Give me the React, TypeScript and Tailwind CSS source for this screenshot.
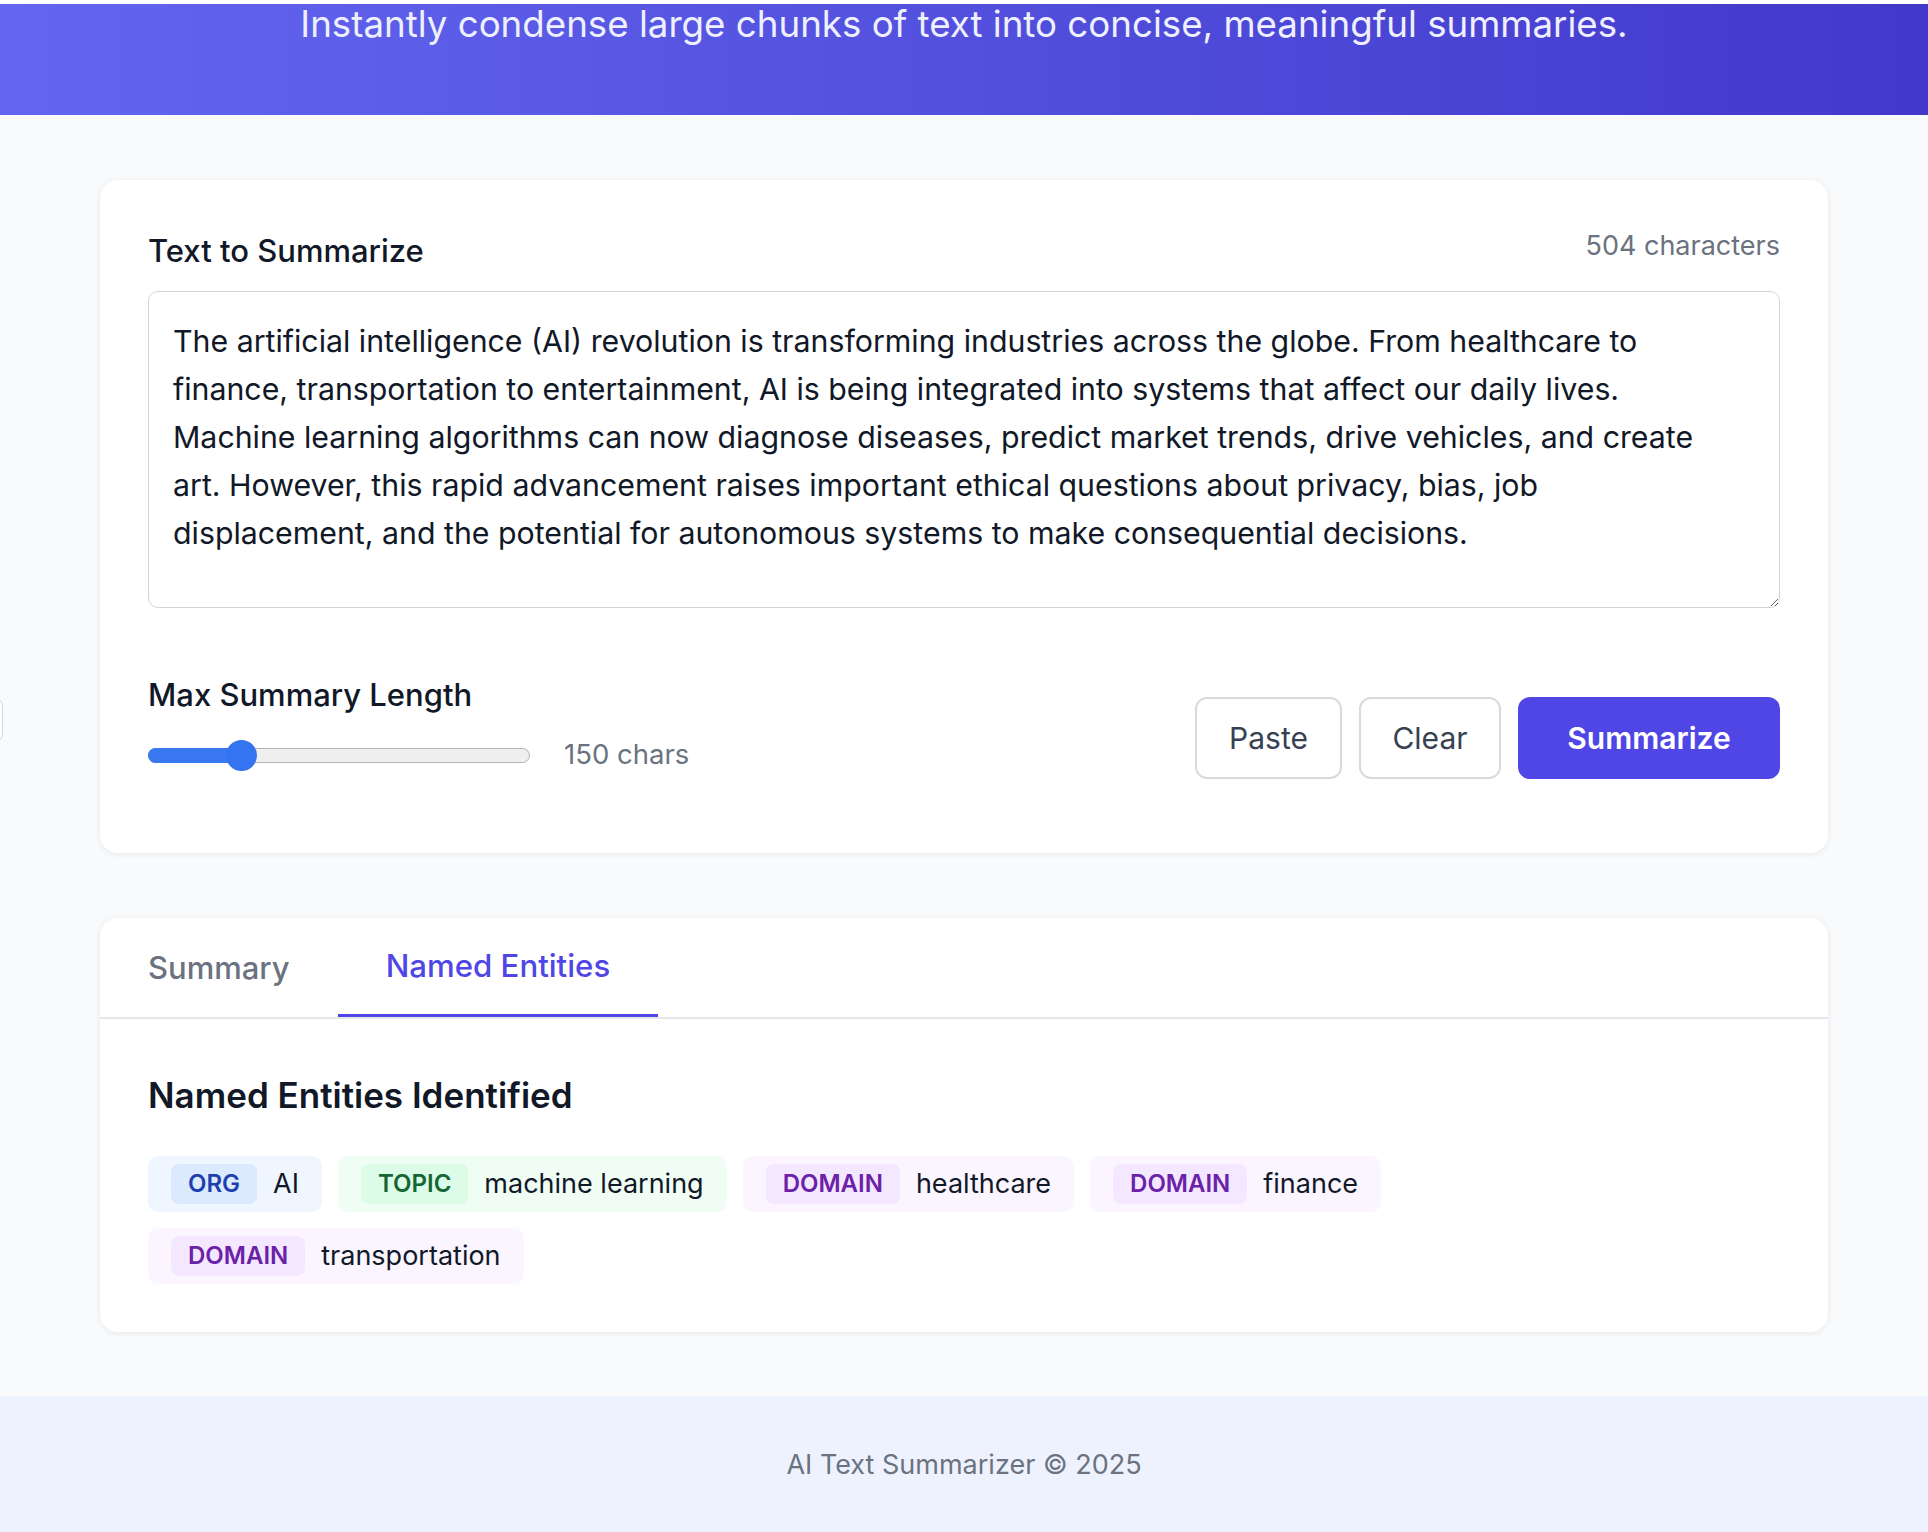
import { useState } from "react";

// line breaks replace spaces so the wrap matches the original (length stays 504)
const SAMPLE_TEXT =
  "The artificial intelligence (AI) revolution is transforming industries across the globe. From healthcare to\nfinance, transportation to entertainment, AI is being integrated into systems that affect our daily lives.\nMachine learning algorithms can now diagnose diseases, predict market trends, drive vehicles, and create\nart. However, this rapid advancement raises important ethical questions about privacy, bias, job\ndisplacement, and the potential for autonomous systems to make consequential decisions.";

type Entity = { type: "ORG" | "TOPIC" | "DOMAIN"; text: string };

const entities: Entity[] = [
  { type: "ORG", text: "AI" },
  { type: "TOPIC", text: "machine learning" },
  { type: "DOMAIN", text: "healthcare" },
  { type: "DOMAIN", text: "finance" },
  { type: "DOMAIN", text: "transportation" },
];

const chipStyles = {
  ORG: { chip: "bg-[#eff6ff]", badge: "bg-[#dbeafe] text-[#1e40af]" },
  TOPIC: { chip: "bg-[#f0fdf4]", badge: "bg-[#dcfce7] text-[#166534]" },
  DOMAIN: { chip: "bg-[#faf5ff]", badge: "bg-[#f3e8ff] text-[#6b21a8]" },
};

const MIN = 50;
const MAX = 500;

const App = () => {
  const [text, setText] = useState(SAMPLE_TEXT);
  const [maxLength] = useState(150);
  const [tab, setTab] = useState<"summary" | "entities">("entities");

  // thumb position on the 382px track
  const pct = (maxLength - MIN) / (MAX - MIN);
  const thumbLeft = pct * (382 - 31);

  return (
    <div className="relative flex min-h-screen flex-col bg-[#f9fafb] font-[Inter,'Noto_Sans',sans-serif] text-[#111827]">
      <div className="h-[4px] bg-white" />
      {/* header */}
      <header className="bg-linear-to-r from-[#6366f1] to-[#4338ca] pb-[71px] text-center">
        <p className="text-[36.7px] leading-[40px] text-[#eef0ff]">
          Instantly condense large chunks of text into concise, meaningful summaries.
        </p>
      </header>

      {/* off-screen floating thing at left edge */}
      <div className="absolute left-[-120px] top-[698px] h-[44px] w-[123px] rounded-lg border border-gray-300 bg-white" />

      <main className="flex flex-col gap-[65px] px-[100px] pt-[65px] pb-[64px]">
        {/* input card */}
        <section className="rounded-[18px] bg-white px-[48px] pt-[48px] pb-[74px] shadow-[0_1px_6px_rgba(0,0,0,0.08)]">
          <div className="flex items-start justify-between">
            <label htmlFor="input" className="text-[31px] font-medium leading-[46px]">
              Text to Summarize
            </label>
            <span className="text-[27px] leading-[36px] text-[#6b7280]">
              {text.length} characters
            </span>
          </div>
          <textarea
            id="input"
            value={text}
            onChange={(e) => setText(e.target.value)}
            className="mt-[17px] block h-[317px] w-full rounded-[10px] border border-[#d1d5db] px-[24px] pt-[25px] text-[30.3px] leading-[48px] text-[#111827] outline-none"
          />

          <div className="mt-[66px] flex items-end justify-between">
            <div className="pb-[4px]">
              <div className="text-[31px] font-medium leading-[42px]">Max Summary Length</div>
              <div className="mt-[19px] flex h-[40px] items-center">
                <div className="relative h-[31px] w-[382px]">
                  <div className="absolute left-0 right-0 top-[8px] h-[15px] rounded-full border border-[#b3b3b3] bg-[#efefef]" />
                  <div
                    className="absolute left-0 top-[8px] h-[15px] rounded-l-full bg-[#3a78f2]"
                    style={{ width: thumbLeft + 16 }}
                  />
                  <div
                    className="absolute top-0 h-[31px] w-[31px] rounded-full bg-[#3574f0]"
                    style={{ left: thumbLeft }}
                  />
                </div>
                <span className="ml-[34px] text-[27.5px] text-[#6b7280]">{maxLength} chars</span>
              </div>
            </div>

            <div className="flex gap-[17px]">
              <button className="h-[82px] w-[147px] rounded-[12px] border-2 border-[#d8dae0] bg-white text-[30px] text-[#374151]">
                Paste
              </button>
              <button
                onClick={() => setText("")}
                className="h-[82px] w-[142px] rounded-[12px] border-2 border-[#d8dae0] bg-white text-[30px] text-[#374151]"
              >
                Clear
              </button>
              <button className="h-[82px] w-[262px] rounded-[12px] bg-[#4f46e5] text-[30px] font-semibold text-white">
                Summarize
              </button>
            </div>
          </div>
        </section>

        {/* results card */}
        <section className="rounded-[18px] bg-white shadow-[0_1px_6px_rgba(0,0,0,0.08)]">
          <div className="flex border-b-2 border-[#e5e7eb]">
            <button
              onClick={() => setTab("summary")}
              className={
                tab === "summary"
                  ? "h-[99px] border-b-[3px] border-[#4f46e5] px-[48px] text-[31px] font-medium text-[#4f46e5]"
                  : "h-[99px] border-b-[3px] border-transparent px-[48px] pt-[4px] text-[31px] font-medium text-[#6b7280]"
              }
            >
              Summary
            </button>
            <button
              onClick={() => setTab("entities")}
              className={
                tab === "entities"
                  ? "h-[99px] border-b-[3px] border-[#4f46e5] px-[48px] text-[31.2px] font-medium text-[#4f46e5]"
                  : "h-[99px] border-b-[3px] border-transparent px-[48px] pt-[4px] text-[31.2px] font-medium text-[#6b7280]"
              }
            >
              Named Entities
            </button>
          </div>

          <div className="p-[48px]">
            {tab === "entities" ? (
              <>
                <h2 className="mb-[33px] text-[35px] font-semibold leading-[56px]">
                  Named Entities Identified
                </h2>
                <div className="flex max-w-[1400px] flex-wrap gap-x-[16px] gap-y-[16px]">
                  {entities.map((ent, i) => (
                    <div
                      key={i}
                      className={`flex h-[56px] items-center gap-[16px] rounded-[10px] px-[23px] ${chipStyles[ent.type].chip}`}
                    >
                      <span
                        className={`flex h-[40px] items-center rounded-[8px] px-[17px] text-[24px] font-semibold ${chipStyles[ent.type].badge}`}
                      >
                        {ent.type}
                      </span>
                      <span className="text-[27px]">{ent.text}</span>
                    </div>
                  ))}
                </div>
              </>
            ) : (
              <p className="text-[30px] leading-[48px] text-[#6b7280]">
                Your summary will appear here.
              </p>
            )}
          </div>
        </section>
      </main>

      <footer className="flex-1 bg-[#eef2ff] py-[48px] text-center text-[27px] leading-[42px] text-[#6b7280]">
        AI Text Summarizer © 2025
      </footer>
    </div>
  );
};

export default App;
